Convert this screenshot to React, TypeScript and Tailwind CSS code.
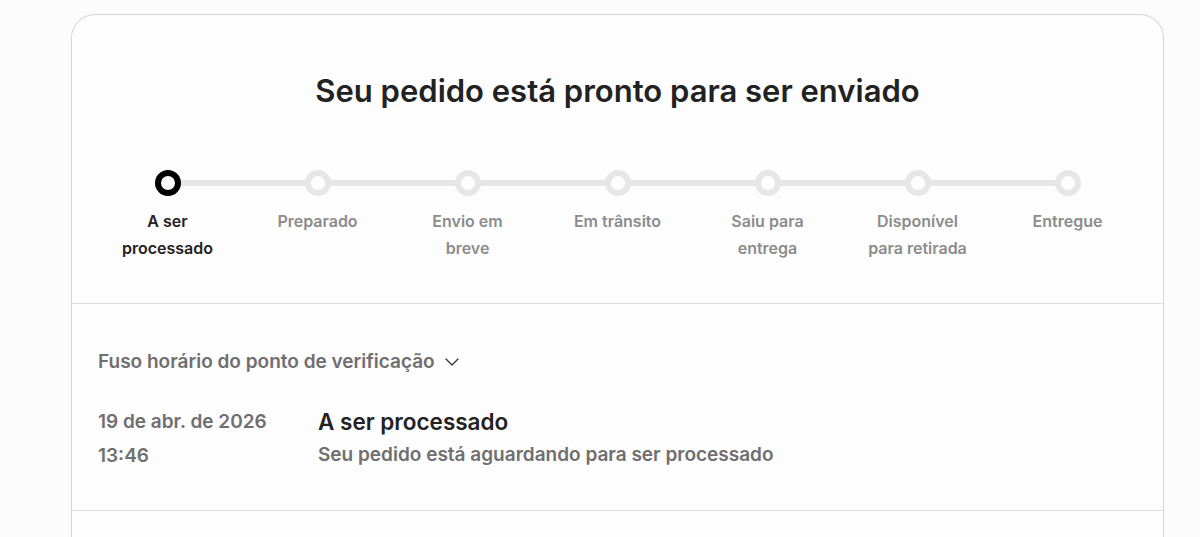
import React from 'react';
import { ChevronDown } from 'lucide-react';

const steps = [
  ['A ser', 'processado'],
  ['Preparado'],
  ['Envio em', 'breve'],
  ['Em trânsito'],
  ['Saiu para', 'entrega'],
  ['Disponível', 'para retirada'],
  ['Entregue'],
];

export default function App() {
  const active = 0;

  return (
    <div className="min-h-screen bg-[#fcfcfc] pl-[71px] pr-[36px] pt-[14px]" style={{ fontFamily: 'Inter, "Noto Sans", sans-serif' }}>
      <div className="rounded-t-[24px] border border-b-0 border-[#d6d6d6] bg-[#fdfdfd]">
        {/* Header + stepper */}
        <div className="pt-[56px] pb-[41px]">
          <h1 className="text-center text-[31px] font-semibold leading-[40px] text-[#222]">
            Seu pedido está pronto para ser enviado
          </h1>

          <div className="relative mx-auto mt-[59px] flex w-[1050px]">
            {/* track */}
            <div className="absolute left-[75px] right-[75px] top-[10px] h-[6px] bg-[#e6e6e6]" />
            {steps.map((lines, i) => (
              <div key={i} className="relative flex w-[150px] flex-col items-center">
                <div
                  className={`h-[26px] w-[26px] rounded-full border-[6px] bg-[#fdfdfd] ${
                    i === active ? 'border-black' : 'border-[#e6e6e6]'
                  }`}
                />
                <div
                  className={`mt-[12px] text-center text-[16px] font-semibold leading-[27px] ${
                    i === active ? 'text-[#222]' : 'text-[#8c8c8c]'
                  }`}
                >
                  {lines.map((l) => (
                    <div key={l}>{l}</div>
                  ))}
                </div>
              </div>
            ))}
          </div>
        </div>

        {/* Checkpoints */}
        <div className="border-t border-[#dedede] px-[26px] pt-[44px] pb-[37px]">
          <button className="flex items-center gap-[5px] text-[19px] font-semibold leading-[27px] text-[#6f6f6f]">
            Fuso horário do ponto de verificação
            <ChevronDown size={24} strokeWidth={1.3} className="text-[#333]" />
          </button>

          <div className="mt-[30px] flex">
            <div className="w-[220px] text-[19px] font-semibold leading-[34px] text-[#6f6f6f]">
              <div>19 de abr. de 2026</div>
              <div>13:46</div>
            </div>
            <div>
              <div className="text-[22.5px] font-semibold leading-[34px] text-[#222]">A ser processado</div>
              <div className="text-[19px] font-semibold leading-[32px] text-[#6f6f6f]">
                Seu pedido está aguardando para ser processado
              </div>
            </div>
          </div>
        </div>

        <div className="h-[30px] border-t border-[#dedede]" />
      </div>
    </div>
  );
}
